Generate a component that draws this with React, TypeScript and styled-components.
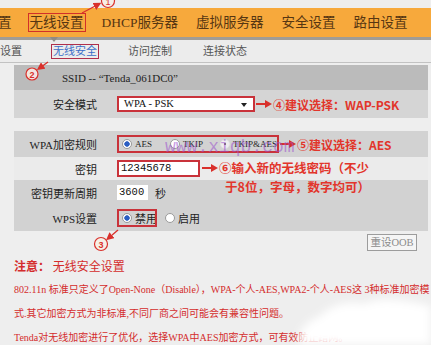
import * as React from 'react'
import styled, { createGlobalStyle } from 'styled-components'

const RED = '#d9302b'

const GlobalStyle = createGlobalStyle`
  html, body {
    margin: 0;
    padding: 0;
    background: #eeeeee;
  }
  body {
    font-family: "Liberation Serif", "Noto Sans CJK SC", serif;
  }
`

const navItems = ['置', '无线设置', 'DHCP服务器', '虚拟服务器', '安全设置', '路由设置']
const subItems = ['设置', '无线安全', '访问控制', '连接状态']

const Arrow = () => (
  <svg width="16" height="8" viewBox="0 0 16 8">
    <line x1="0" y1="4" x2="10" y2="4" stroke={RED} strokeWidth="2" />
    <polygon points="9,0 16,4 9,8" fill={RED} />
  </svg>
)

const App = () => (
  <Page>
    <GlobalStyle />
    <NavBar>
      {navItems.map(item => (
        <NavItem key={item} $active={item === '无线设置'}>
          {item}
        </NavItem>
      ))}
    </NavBar>
    <SubNav>
      {subItems.map(item => (
        <SubItem key={item} $active={item === '无线安全'}>
          {item}
        </SubItem>
      ))}
    </SubNav>

    <Panel>
      <SsidRow>SSID -- “Tenda_061DC0”</SsidRow>
      <Row $h={28} $bg="#d5d5d5">
        <Label>安全模式</Label>
        <Value>
          <Select>WPA - PSK</Select>
          <Callout>
            <Arrow />
            ④建议选择：WAP-PSK
          </Callout>
        </Value>
      </Row>
      <Spacer />
      <Row $h={26} $bg="#d2d2d2">
        <Label>WPA加密规则</Label>
        <Value>
          <Marked $w={162}>
            <Option $gap={18}>
              <Radio $checked />
              AES
            </Option>
            <Option $gap={17}>
              <Radio />
              TKIP
            </Option>
            <Option $gap={0}>
              <Radio $faint />
              TKIP&amp;AES
            </Option>
          </Marked>
          <Callout>
            <Arrow />
            ⑤建议选择：AES
          </Callout>
        </Value>
      </Row>
      <Row $h={23} $bg="#ebebeb">
        <Label>密钥</Label>
        <Value>
          <KeyInput>12345678</KeyInput>
          <HangingCallout>
            <Arrow />
            <span>
              ⑥输入新的无线密码（不少
              <br />
              <Indent>于8位，字母，数字均可）</Indent>
            </span>
          </HangingCallout>
        </Value>
      </Row>
      <Row $h={25} $bg="#d2d2d2">
        <Label>密钥更新周期</Label>
        <Value>
          <PeriodInput>3600</PeriodInput>
          <Unit>秒</Unit>
        </Value>
      </Row>
      <Row $h={26} $bg="#d2d2d2">
        <Label>WPS设置</Label>
        <Value>
          <Marked $w={40}>
            <Option $gap={0}>
              <Radio $checked />
              <Cjk>禁用</Cjk>
            </Option>
          </Marked>
          <Option $gap={0} style={{ marginLeft: 8 }}>
            <Radio />
            <Cjk>启用</Cjk>
          </Option>
        </Value>
      </Row>
    </Panel>

    <ButtonRow>
      <ResetButton>重设OOB</ResetButton>
    </ButtonRow>

    <Notes>
      <NoteTitle>
        <b>注意：</b> 无线安全设置
      </NoteTitle>
      <NoteLine>802.11n 标准只定义了Open-None（Disable），WPA-个人-AES,WPA2-个人-AES这 3种标准加密模</NoteLine>
      <NoteLine>式.其它加密方式为非标准,不同厂商之间可能会有兼容性问题。</NoteLine>
      <NoteLine>Tenda对无线加密进行了优化，选择WPA中AES加密方式，可有效防止蹭网。</NoteLine>
    </Notes>

    <Watermark>www.xiqb.com</Watermark>

    <Overlay width="431" height="345" viewBox="0 0 431 345">
      <defs>
        <marker id="head" markerWidth="6" markerHeight="6" refX="4" refY="3" orient="auto">
          <path d="M0,0 L6,3 L0,6 Z" fill={RED} />
        </marker>
        <filter id="soft">
          <feGaussianBlur stdDeviation="4" />
        </filter>
      </defs>
      <line x1="82" y1="13" x2="99" y2="4" stroke={RED} strokeWidth="1.3" markerEnd="url(#head)" />
      <circle cx="108" cy="1" r="6.5" fill="#f6efe6" stroke={RED} strokeWidth="1.2" />
      <text x="108" y="4.5" fontSize="9" fill={RED} textAnchor="middle" fontFamily="Liberation Sans">1</text>

      <line x1="48" y1="62" x2="39" y2="68.5" stroke={RED} strokeWidth="1.3" markerEnd="url(#head)" />
      <circle cx="32" cy="74" r="6" fill="#f3e6e0" stroke={RED} strokeWidth="1.2" />
      <text x="32" y="77.5" fontSize="9" fill={RED} textAnchor="middle" fontFamily="Liberation Sans" fontWeight="bold">2</text>

      <line x1="118" y1="230" x2="108" y2="238.5" stroke={RED} strokeWidth="1.3" markerEnd="url(#head)" />
      <circle cx="101" cy="244" r="6.5" fill="#f6efe6" stroke={RED} strokeWidth="1.2" />
      <text x="101" y="247.5" fontSize="9" fill={RED} textAnchor="middle" fontFamily="Liberation Sans" fontWeight="bold">3</text>

      <path
        d="M300,345 C296,332 306,322 320,316 C330,306 346,300 364,304 C380,296 404,300 431,306 L431,345 Z"
        fill="#ffffff"
        filter="url(#soft)"
      />
    </Overlay>
  </Page>
)

const Page = styled.div`
  position: relative;
  width: 431px;
  height: 345px;
  overflow: hidden;
  padding-top: 8px;
  box-sizing: border-box;
  background: #eeeeee;
`

const NavBar = styled.div`
  display: flex;
  align-items: center;
  gap: 14px;
  height: 29px;
  padding-left: 0;
  background: #f7a93c;
  border-bottom: 3px solid #a09c96;
  font-size: 13.5px;
  color: #563612;

  & > div:first-child {
    margin-left: -4px;
  }
`

const NavItem = styled.div<{ $active?: boolean }>`
  position: relative;
  white-space: nowrap;
  line-height: 17px;
  padding: 0 1px;
  border: 1.5px solid ${p => (p.$active ? '#d2302a' : 'transparent')};

  ${p =>
    p.$active &&
    `
    &::after {
      content: '';
      position: absolute;
      left: 21px;
      top: 23px;
      border-left: 4px solid transparent;
      border-right: 4px solid transparent;
      border-top: 5px solid #8f8b86;
    }
  `}
`

const SubNav = styled.div`
  display: flex;
  align-items: center;
  gap: 27px;
  height: 22px;
  margin-left: -2px;
  background: #ececec;
  border-bottom: 1px solid #c2c2c2;
  font-size: 11px;
  color: #555555;
`

const SubItem = styled.div<{ $active?: boolean }>`
  line-height: 13px;
  padding: 0 1px;
  border: 1px solid ${p => (p.$active ? '#b02f4c' : 'transparent')};
  color: ${p => (p.$active ? '#3d6fc8' : '#555555')};
`

const Panel = styled.div`
  margin: 2px 3px 0 14px;
`

const SsidRow = styled.div`
  display: flex;
  align-items: center;
  height: 25px;
  padding-left: 48px;
  background: #bbbbbb;
  font-size: 11px;
  color: #222222;
`

const Row = styled.div<{ $h: number; $bg: string }>`
  display: grid;
  grid-template-columns: 83px 1fr;
  column-gap: 20px;
  align-items: center;
  height: ${p => p.$h}px;
  background: ${p => p.$bg};
`

const Spacer = styled.div`
  height: 13px;
`

const Label = styled.div`
  text-align: right;
  font-size: 11px;
  color: #222222;
  white-space: nowrap;
`

const Value = styled.div`
  position: relative;
  display: flex;
  align-items: center;
  height: 100%;
`

const Select = styled.div`
  position: relative;
  width: 138px;
  height: 16px;
  box-sizing: border-box;
  border: 2px solid #c9323a;
  background: #ffffff;
  padding-left: 5px;
  font-size: 10.5px;
  line-height: 12px;
  color: #111111;

  &::after {
    content: '';
    position: absolute;
    right: 6px;
    top: 5px;
    border-left: 3px solid transparent;
    border-right: 3px solid transparent;
    border-top: 4px solid #222222;
  }
`

const Callout = styled.div`
  display: flex;
  align-items: center;
  gap: 1px;
  margin-left: 1px;
  font-family: "Noto Sans CJK SC", "Liberation Sans", sans-serif;
  font-weight: bold;
  font-size: 12px;
  color: #e2352b;
  white-space: nowrap;
`

const HangingCallout = styled(Callout)`
  position: absolute;
  left: 84px;
  top: 1px;
  align-items: flex-start;
  font-size: 12.5px;
  line-height: 19px;

  svg {
    margin-top: 6px;
  }
`

const Indent = styled.span`
  padding-left: 6px;
`

const Marked = styled.div<{ $w: number }>`
  display: flex;
  align-items: center;
  width: ${p => p.$w}px;
  height: 18px;
  box-sizing: border-box;
  border: 2px solid #c9323a;
  padding-left: 3px;
  overflow: hidden;
`

const Option = styled.span<{ $gap: number }>`
  display: inline-flex;
  align-items: center;
  gap: 3px;
  margin-right: ${p => p.$gap}px;
  font-size: 9px;
  color: #222222;
  white-space: nowrap;
`

const Radio = styled.span<{ $checked?: boolean; $faint?: boolean }>`
  display: inline-block;
  width: 8px;
  height: 8px;
  border-radius: 50%;
  border: 1px solid ${p => (p.$faint ? '#e4e4e4' : '#9a9a9a')};
  background: ${p =>
    p.$checked
      ? 'radial-gradient(circle, #2b5ec2 0 2.4px, #ffffff 3px)'
      : p.$faint
      ? 'radial-gradient(circle, #777 0 0.8px, #efefef 1.2px)'
      : '#ffffff'};
`

const Cjk = styled.span`
  font-size: 11px;
`

const KeyInput = styled.div`
  width: 83px;
  height: 17px;
  box-sizing: border-box;
  border: 2px solid #c9323a;
  background: #ffffff;
  padding-left: 2px;
  font-family: "Liberation Mono", monospace;
  font-size: 10.5px;
  line-height: 13px;
  color: #111111;
`

const PeriodInput = styled.div`
  width: 31px;
  height: 15px;
  box-sizing: border-box;
  background: #ffffff;
  padding-left: 2px;
  font-family: "Liberation Mono", monospace;
  font-size: 10.5px;
  line-height: 15px;
  color: #111111;
`

const Unit = styled.span`
  margin-left: 7px;
  font-size: 11px;
  color: #222222;
`

const ButtonRow = styled.div`
  display: flex;
  justify-content: flex-end;
  padding-right: 14px;
  margin-top: 3px;
`

const ResetButton = styled.div`
  width: 50px;
  height: 17px;
  box-sizing: border-box;
  border: 1px solid #9c9c9c;
  background: #f5f5f5;
  color: #8c8c8c;
  font-size: 10.5px;
  line-height: 15px;
  text-align: center;
`

const Notes = styled.div`
  margin-top: 3px;
  padding-left: 14px;
  color: #d42c2c;
`

const NoteTitle = styled.div`
  font-family: "Noto Sans CJK SC", sans-serif;
  font-size: 12px;
  line-height: 24px;
`

const NoteLine = styled.div`
  font-size: 10px;
  line-height: 24px;
  white-space: nowrap;
`

const Watermark = styled.div`
  position: absolute;
  left: 165px;
  top: 137px;
  font-family: "Liberation Mono", monospace;
  font-size: 18px;
  color: rgba(155, 80, 205, 0.55);
  pointer-events: none;
`

const Overlay = styled.svg`
  position: absolute;
  left: 0;
  top: 0;
  pointer-events: none;
`

export default App
